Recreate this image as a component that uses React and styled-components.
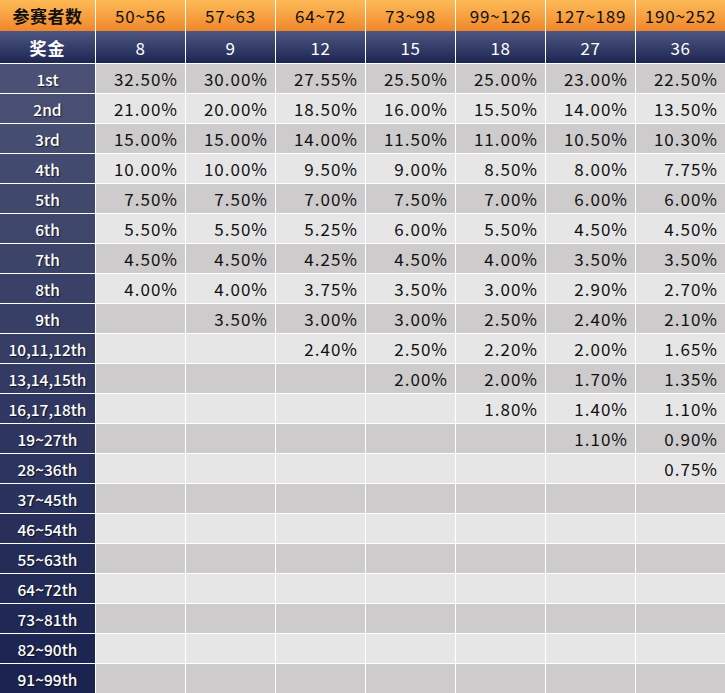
import React from 'react';
import styled, { createGlobalStyle } from 'styled-components';

const GlobalStyle = createGlobalStyle`
  html, body {
    margin: 0;
    padding: 0;
    background: #ffffff;
  }
  body {
    font-family: "Noto Sans CJK SC", "Noto Sans", sans-serif;
  }
`;

const groups = [
  { range: '50~56', prize: '8' },
  { range: '57~63', prize: '9' },
  { range: '64~72', prize: '12' },
  { range: '73~98', prize: '15' },
  { range: '99~126', prize: '18' },
  { range: '127~189', prize: '27' },
  { range: '190~252', prize: '36' },
];

const rows = [
  ['1st', '32.50%', '30.00%', '27.55%', '25.50%', '25.00%', '23.00%', '22.50%'],
  ['2nd', '21.00%', '20.00%', '18.50%', '16.00%', '15.50%', '14.00%', '13.50%'],
  ['3rd', '15.00%', '15.00%', '14.00%', '11.50%', '11.00%', '10.50%', '10.30%'],
  ['4th', '10.00%', '10.00%', '9.50%', '9.00%', '8.50%', '8.00%', '7.75%'],
  ['5th', '7.50%', '7.50%', '7.00%', '7.50%', '7.00%', '6.00%', '6.00%'],
  ['6th', '5.50%', '5.50%', '5.25%', '6.00%', '5.50%', '4.50%', '4.50%'],
  ['7th', '4.50%', '4.50%', '4.25%', '4.50%', '4.00%', '3.50%', '3.50%'],
  ['8th', '4.00%', '4.00%', '3.75%', '3.50%', '3.00%', '2.90%', '2.70%'],
  ['9th', '', '3.50%', '3.00%', '3.00%', '2.50%', '2.40%', '2.10%'],
  ['10,11,12th', '', '', '2.40%', '2.50%', '2.20%', '2.00%', '1.65%'],
  ['13,14,15th', '', '', '', '2.00%', '2.00%', '1.70%', '1.35%'],
  ['16,17,18th', '', '', '', '', '1.80%', '1.40%', '1.10%'],
  ['19~27th', '', '', '', '', '', '1.10%', '0.90%'],
  ['28~36th', '', '', '', '', '', '', '0.75%'],
  ['37~45th', '', '', '', '', '', '', ''],
  ['46~54th', '', '', '', '', '', '', ''],
  ['55~63th', '', '', '', '', '', '', ''],
  ['64~72th', '', '', '', '', '', '', ''],
  ['73~81th', '', '', '', '', '', '', ''],
  ['82~90th', '', '', '', '', '', '', ''],
  ['91~99th', '', '', '', '', '', '', ''],
];

// first column fades from slate (top) to deep navy (bottom)
const TOP = [74, 81, 117];
const BOTTOM = [27, 36, 81];
const shadeFor = (i) => {
  const t = i / (rows.length - 1);
  const c = TOP.map((v, k) => Math.round(v + (BOTTOM[k] - v) * t));
  return `rgb(${c[0]}, ${c[1]}, ${c[2]})`;
};

const Table = styled.div`
  width: 725px;
  display: flex;
  flex-direction: column;
  background: #ffffff;
`;

const Row = styled.div`
  display: grid;
  grid-template-columns: 95px repeat(7, 89px);
  column-gap: 1px;
  height: ${(p) => p.$h}px;
  margin-bottom: ${(p) => (p.$gap ? 1 : 0)}px;
`;

const RangeCell = styled.div`
  display: flex;
  align-items: center;
  justify-content: center;
  background: linear-gradient(to bottom, #fdba56 0%, #f8a444 45%, #f0862a 100%);
  color: #111111;
  font-size: 17px;
  font-weight: ${(p) => (p.$title ? 700 : 400)};
  letter-spacing: ${(p) => (p.$title ? '0.5px' : '0.8px')};
`;

const PrizeCell = styled.div`
  display: flex;
  align-items: center;
  justify-content: center;
  background: linear-gradient(to bottom, #4e5781 0%, #363f6a 50%, #1d2653 100%);
  color: #ffffff;
  font-size: 17px;
  font-weight: ${(p) => (p.$title ? 700 : 400)};
  letter-spacing: ${(p) => (p.$title ? '1px' : '0.5px')};
`;

const PlaceCell = styled.div`
  display: flex;
  align-items: center;
  justify-content: center;
  background: ${(p) => p.$shade};
  color: #ffffff;
  font-size: 15.5px;
  font-weight: 500;
  text-shadow: 1px 1px 1px rgba(0, 0, 0, 0.65);
`;

const ValueCell = styled.div`
  display: flex;
  align-items: center;
  justify-content: flex-end;
  padding-right: 7px;
  background: ${(p) => (p.$odd ? '#cdcbcc' : '#e6e6e6')};
  color: #111111;
  font-size: 17px;
  letter-spacing: 1px;
`;

export default function App() {
  return (
    <>
      <GlobalStyle />
      <Table>
        <Row $h={31}>
          <RangeCell $title>参赛者数</RangeCell>
          {groups.map((g) => (
            <RangeCell key={g.range}>{g.range}</RangeCell>
          ))}
        </Row>
        <Row $h={32} $gap>
          <PrizeCell $title>奖金</PrizeCell>
          {groups.map((g) => (
            <PrizeCell key={g.range}>{g.prize}</PrizeCell>
          ))}
        </Row>
        {rows.map(([place, ...values], i) => (
          <Row key={place} $h={29} $gap={i < rows.length - 1}>
            <PlaceCell $shade={shadeFor(i)}>{place}</PlaceCell>
            {values.map((v, j) => (
              <ValueCell key={j} $odd={i % 2 === 0}>
                {v}
              </ValueCell>
            ))}
          </Row>
        ))}
      </Table>
    </>
  );
}
